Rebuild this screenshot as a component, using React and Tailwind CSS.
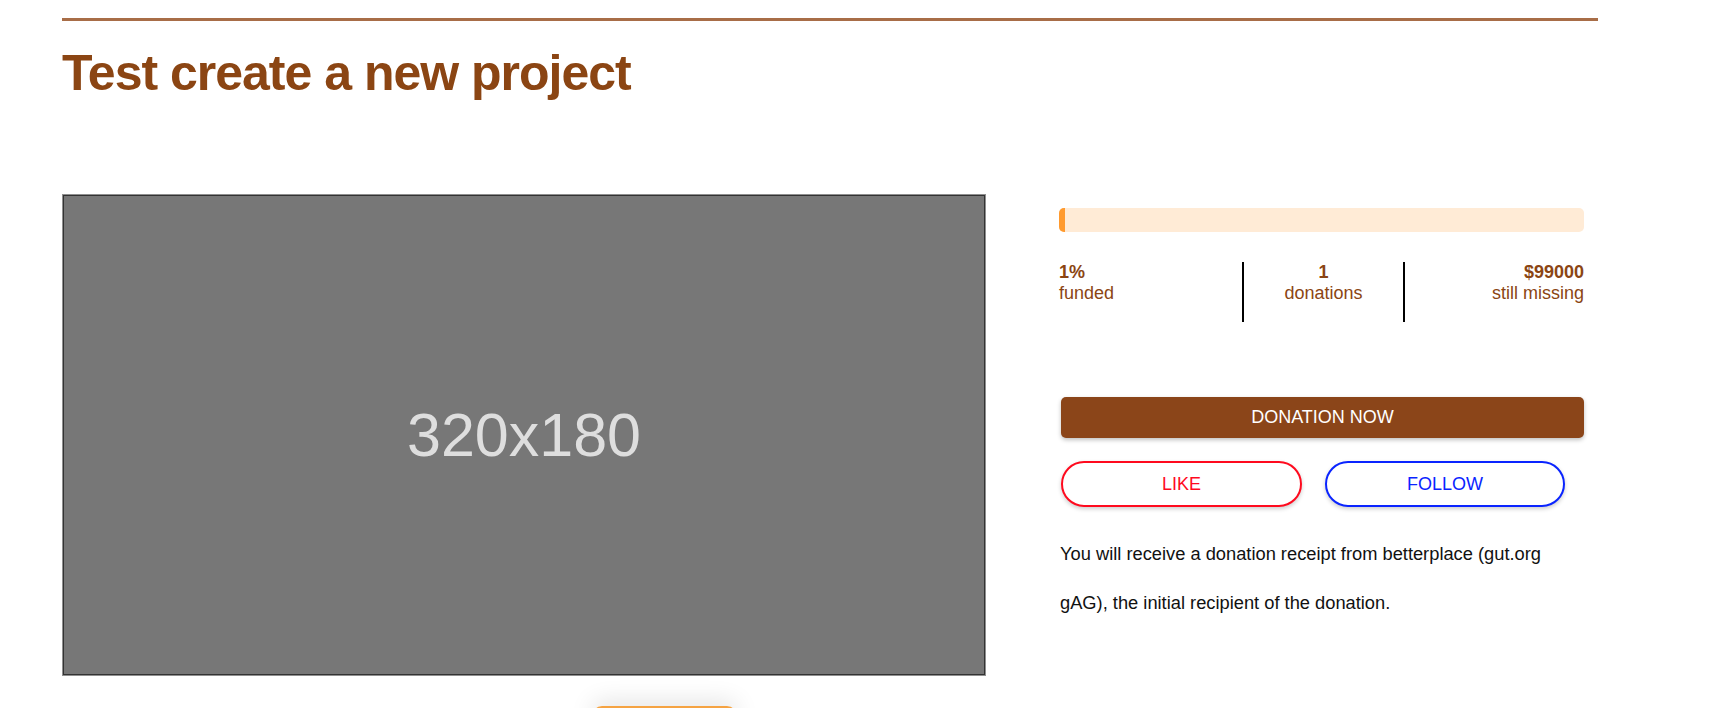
export default function App() {
  return (
    <div className="min-h-screen w-[1726px] bg-white font-['Liberation_Sans',Arial,sans-serif]">
      <div className="ml-[62px] w-[1536px] pt-[18px]">
        <div className="h-[3px] bg-[#a86d47]" />
        <h1 className="mt-[27px] text-[50px] font-bold leading-[50px] tracking-[-1px] text-[#8b4513]">
          Test create a new project
        </h1>
        <div className="mt-[96px] flex gap-[73px]">
          <div className="w-[924px]">
            <div className="border border-[#8f8f8f]">
              <div className="flex h-[480px] items-center justify-center border border-[#333333] bg-[#777777]">
                <span className="text-[61px] leading-none text-[#dedede]">320x180</span>
              </div>
            </div>
            <div className="ml-[530px] mt-[30px] h-[20px] w-[145px] rounded-t-[10px] border-t-[3px] border-[#f5a343] shadow-[0_-4px_24px_rgba(0,0,0,0.12)]" />
          </div>
          <div className="w-[525px] pt-[14px]">
            <div className="h-[24px] rounded-[5px] bg-[#ffebd6]">
              <div className="h-full w-[6px] rounded-l-[5px] bg-[#ff9a2e]" />
            </div>
            <div className="mt-[30px] flex text-[18px] leading-[21px] text-[#8b4513]">
              <div className="w-[183px]">
                <div className="font-bold">1%</div>
                <div>funded</div>
              </div>
              <div className="h-[60px] w-[163px] border-x-2 border-black text-center">
                <div className="font-bold">1</div>
                <div>donations</div>
              </div>
              <div className="flex-1 text-right">
                <div className="font-bold">$99000</div>
                <div>still missing</div>
              </div>
            </div>
            <button className="ml-[2px] mt-[75px] flex h-[41px] w-[523px] items-center justify-center rounded-[5px] bg-[#8b4519] text-[18px] text-white shadow-[0_2px_4px_rgba(0,0,0,0.25)]">
              DONATION NOW
            </button>
            <div className="ml-[2px] mt-[23px] flex gap-[23px]">
              <button className="flex h-[46px] w-[241px] items-center justify-center rounded-full border-2 border-[#ff0a1e] bg-white text-[18px] text-[#ff0a1e] shadow-[0_2px_4px_rgba(0,0,0,0.2)]">
                LIKE
              </button>
              <button className="flex h-[46px] w-[240px] items-center justify-center rounded-full border-2 border-[#0a24ff] bg-white text-[18px] text-[#0a24ff] shadow-[0_2px_4px_rgba(0,0,0,0.2)]">
                FOLLOW
              </button>
            </div>
            <p className="ml-[1px] mt-[22px] w-[505px] text-[18.3px] leading-[49px] text-[#111111]">
              You will receive a donation receipt from betterplace (gut.org gAG), the initial recipient of the donation.
            </p>
          </div>
        </div>
      </div>
    </div>
  );
}
